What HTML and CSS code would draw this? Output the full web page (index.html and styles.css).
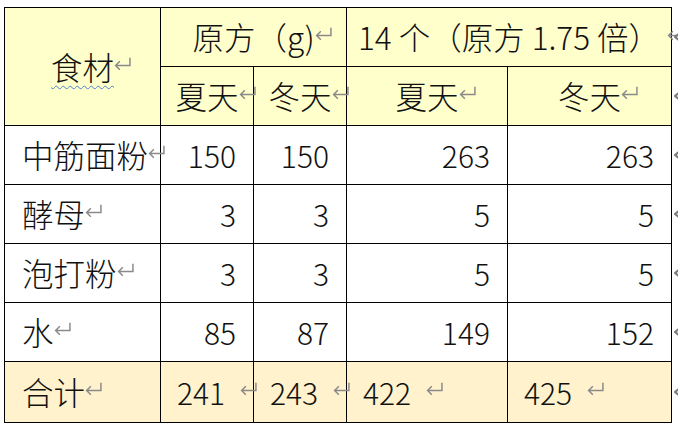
FILE: index.html
```html
<!DOCTYPE html>
<html lang="zh-CN">
<head>
<meta charset="utf-8">
<link rel="stylesheet" href="styles.css">
</head>
<body>
<div class="page">
<table class="recipe">
  <colgroup>
    <col class="c1"><col class="c2"><col class="c3"><col class="c4"><col class="c5"><col class="c6">
  </colgroup>
  <tr class="head">
    <td rowspan="2" class="center"><span class="wavy">食材</span><svg class="pm" viewBox="0 0 16 13"><path d="M15 0.5V8H1.5M5.5 4L1.5 8L5.5 12"/></svg></td>
    <td colspan="2" class="center">原方（g)<svg class="pm" viewBox="0 0 16 13"><path d="M15 0.5V8H1.5M5.5 4L1.5 8L5.5 12"/></svg></td>
    <td colspan="2" class="center">14 个（原方 1.75 倍）<svg class="pm gap" viewBox="0 0 16 13"><path d="M15 0.5V8H1.5M5.5 4L1.5 8L5.5 12"/></svg></td>
    <td class="end"><svg class="re" viewBox="0 0 6 10"><path d="M6 1L1 5L6 9"/></svg></td>
  </tr>
  <tr class="head">
    <td class="center">夏天<svg class="pm" viewBox="0 0 16 13"><path d="M15 0.5V8H1.5M5.5 4L1.5 8L5.5 12"/></svg></td>
    <td class="center">冬天<svg class="pm" viewBox="0 0 16 13"><path d="M15 0.5V8H1.5M5.5 4L1.5 8L5.5 12"/></svg></td>
    <td class="center">夏天<svg class="pm" viewBox="0 0 16 13"><path d="M15 0.5V8H1.5M5.5 4L1.5 8L5.5 12"/></svg></td>
    <td class="center">冬天<svg class="pm" viewBox="0 0 16 13"><path d="M15 0.5V8H1.5M5.5 4L1.5 8L5.5 12"/></svg></td>
    <td class="end"><svg class="re" viewBox="0 0 6 10"><path d="M6 1L1 5L6 9"/></svg></td>
  </tr>
  <tr>
    <td class="label">中筋面粉<svg class="pm" viewBox="0 0 16 13"><path d="M15 0.5V8H1.5M5.5 4L1.5 8L5.5 12"/></svg></td>
    <td class="num">150</td>
    <td class="num">150</td>
    <td class="num">263</td>
    <td class="num">263</td>
    <td class="end"><svg class="re" viewBox="0 0 6 10"><path d="M6 1L1 5L6 9"/></svg></td>
  </tr>
  <tr>
    <td class="label">酵母<svg class="pm" viewBox="0 0 16 13"><path d="M15 0.5V8H1.5M5.5 4L1.5 8L5.5 12"/></svg></td>
    <td class="num">3</td>
    <td class="num">3</td>
    <td class="num">5</td>
    <td class="num">5</td>
    <td class="end"><svg class="re" viewBox="0 0 6 10"><path d="M6 1L1 5L6 9"/></svg></td>
  </tr>
  <tr>
    <td class="label">泡打粉<svg class="pm" viewBox="0 0 16 13"><path d="M15 0.5V8H1.5M5.5 4L1.5 8L5.5 12"/></svg></td>
    <td class="num">3</td>
    <td class="num">3</td>
    <td class="num">5</td>
    <td class="num">5</td>
    <td class="end"><svg class="re" viewBox="0 0 6 10"><path d="M6 1L1 5L6 9"/></svg></td>
  </tr>
  <tr>
    <td class="label">水<svg class="pm" viewBox="0 0 16 13"><path d="M15 0.5V8H1.5M5.5 4L1.5 8L5.5 12"/></svg></td>
    <td class="num">85</td>
    <td class="num">87</td>
    <td class="num">149</td>
    <td class="num">152</td>
    <td class="end"><svg class="re" viewBox="0 0 6 10"><path d="M6 1L1 5L6 9"/></svg></td>
  </tr>
  <tr class="total">
    <td class="label">合计<svg class="pm" viewBox="0 0 16 13"><path d="M15 0.5V8H1.5M5.5 4L1.5 8L5.5 12"/></svg></td>
    <td class="sum">241<svg class="pm wide" viewBox="0 0 16 13"><path d="M15 0.5V8H1.5M5.5 4L1.5 8L5.5 12"/></svg></td>
    <td class="sum">243<svg class="pm wide" viewBox="0 0 16 13"><path d="M15 0.5V8H1.5M5.5 4L1.5 8L5.5 12"/></svg></td>
    <td class="sum">422<svg class="pm wide" viewBox="0 0 16 13"><path d="M15 0.5V8H1.5M5.5 4L1.5 8L5.5 12"/></svg></td>
    <td class="sum">425<svg class="pm wide" viewBox="0 0 16 13"><path d="M15 0.5V8H1.5M5.5 4L1.5 8L5.5 12"/></svg></td>
    <td class="end"><svg class="re" viewBox="0 0 6 10"><path d="M6 1L1 5L6 9"/></svg></td>
  </tr>
</table>
</div>
</body>
</html>
```

FILE: styles.css
```css
html, body {
  margin: 0;
  padding: 0;
  background: #ffffff;
  overflow: hidden;
}

.page {
  width: 678px;
  height: 429px;
  padding: 7px 0 0 4px;
  box-sizing: border-box;
  overflow: hidden;
}

.recipe {
  border-collapse: collapse;
  table-layout: fixed;
  width: 675px;
  font-family: "Noto Sans CJK SC Light", "Noto Sans CJK SC", "Noto Sans", sans-serif;
  font-weight: 300;
  font-size: 31.5px;
  color: #111111;
}

.c1 { width: 156px; }
.c2 { width: 93px; }
.c3 { width: 93px; }
.c4 { width: 161px; }
.c5 { width: 164px; }
.c6 { width: 8px; }

.recipe td {
  border: 1px solid #000000;
  height: 59px;
  padding: 0;
  box-sizing: border-box;
  white-space: nowrap;
  vertical-align: middle;
  line-height: 1.2;
}

.recipe tr.total td {
  height: 61px;
}

.head td {
  background: #ffffcc;
}

.total td {
  background: #fff2cc;
}

.recipe td.end {
  border: none;
  background: transparent;
  padding-left: 2px;
}

.center {
  text-align: center;
}

.label {
  text-align: left;
  padding-left: 17px !important;
}

.num {
  text-align: right;
  padding-right: 17px !important;
  font-size: 30px;
}

.sum {
  text-align: left;
  padding-left: 16px !important;
  font-size: 30px;
}

.wavy {
  text-decoration: underline wavy #4f7fd0;
  text-decoration-thickness: 1px;
  text-underline-offset: 5px;
}

.pm {
  width: 17px;
  height: 14px;
  margin-right: -17px;
  vertical-align: 9px;
  fill: none;
  stroke: #8a8a8a;
  stroke-width: 1.4;
}

.pm.gap {
  margin-left: 7px;
  margin-right: -24px;
}

.pm.wide {
  margin-left: 15px;
  margin-right: -32px;
}

.re {
  display: block;
  width: 6px;
  height: 10px;
  fill: none;
  stroke: #7a7a7a;
  stroke-width: 2.2;
}
```
